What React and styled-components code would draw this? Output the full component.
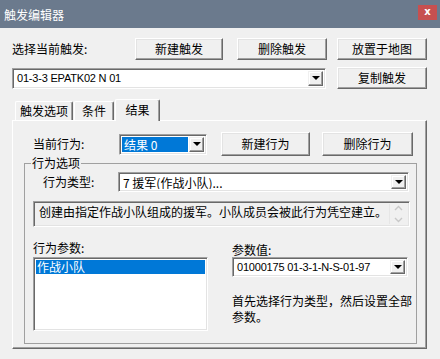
import React from "react";
import styled, { createGlobalStyle } from "styled-components";

const GlobalStyle = createGlobalStyle`
  html, body {
    margin: 0;
    padding: 0;
    background: #2f3443;
  }
  body {
    font-family: "Noto Sans CJK SC", "Liberation Sans", sans-serif;
    font-size: 12px;
    color: #000;
  }
`;

const Window = styled.div`
  width: 440px;
  height: 359px;
  background: #f0f0f0;
  display: flex;
  flex-direction: column;
  overflow: hidden;
`;

const TitleBar = styled.div`
  height: 28px;
  flex: none;
  box-sizing: border-box;
  background: #6b7a8d;
  display: flex;
  align-items: flex-start;
  justify-content: space-between;
  padding: 0 3px 0 4px;
`;

const Title = styled.span`
  color: #fff;
  font-size: 12px;
  line-height: 14px;
  margin-top: 8px;
`;

const CloseBtn = styled.div`
  width: 19px;
  height: 15px;
  margin-top: 5px;
  background: #c75050;
  color: #fff;
  font: bold 10px/14px "DejaVu Sans", sans-serif;
  text-align: center;
`;

const Body = styled.div`
  padding: 10px 0 0 12px;
  display: flex;
  flex-direction: column;
`;

const Row = styled.div`
  display: flex;
  align-items: center;
  margin-top: ${(p) => p.$mt || 0}px;
`;

const Label = styled.span`
  width: ${(p) => p.$w}px;
  flex: none;
  line-height: 14px;
  white-space: nowrap;
  margin-left: ${(p) => p.$ml || 0}px;
  margin-top: ${(p) => p.$mt || 0}px;
`;

const Button = styled.button`
  box-sizing: border-box;
  width: ${(p) => p.$w}px;
  height: ${(p) => p.$h || 22}px;
  margin-left: ${(p) => p.$ml || 0}px;
  flex: none;
  padding: 0;
  background: #f0f0f0;
  border: 1px solid;
  border-color: #fff #696969 #696969 #fff;
  box-shadow: inset -1px -1px 0 #a0a0a0, inset 1px 1px 0 #e3e3e3;
  font: 12px/14px "Noto Sans CJK SC", sans-serif;
  color: #000;
`;

const Sunken = styled.div`
  box-sizing: border-box;
  border: 1px solid;
  border-color: #a0a0a0 #fff #fff #a0a0a0;
  box-shadow: inset 1px 1px 0 #696969, inset -1px -1px 0 #e3e3e3;
`;

const Combo = styled(Sunken)`
  width: ${(p) => p.$w}px;
  height: ${(p) => p.$h || 21}px;
  margin-left: ${(p) => p.$ml || 0}px;
  flex: none;
  display: flex;
  align-items: stretch;
  background: #fff;
  padding: 2px;
`;

const ComboText = styled.div`
  flex: 1;
  display: flex;
  align-items: center;
  padding-left: 2px;
  margin-right: 1px;
  background: ${(p) => (p.$sel ? "#0078d7" : "transparent")};
  color: ${(p) => (p.$sel ? "#fff" : "#000")};
  font-family: ${(p) =>
    p.$latin ? '"Liberation Sans", sans-serif' : '"Noto Sans CJK SC", sans-serif'};
  font-size: ${(p) => (p.$latin ? 11 : 12)}px;
  letter-spacing: ${(p) => (p.$latin ? "-0.2px" : "0")};
  white-space: nowrap;
  overflow: hidden;
`;

const DropBtn = styled.div`
  width: 15px;
  flex: none;
  box-sizing: border-box;
  background: #f0f0f0;
  border: 1px solid;
  border-color: #f0f0f0 #696969 #696969 #f0f0f0;
  box-shadow: inset -1px -1px 0 #a0a0a0, inset 1px 1px 0 #fff;
  display: flex;
  align-items: center;
  justify-content: center;

  &::after {
    content: "";
    width: 0;
    height: 0;
    border-left: 4px solid transparent;
    border-right: 4px solid transparent;
    border-top: 4px solid #000;
  }
`;

const TabStrip = styled.div`
  display: flex;
  align-items: flex-end;
  height: 20px;
  margin-top: 11px;
  padding-left: 3px;
`;

const Tab = styled.div`
  box-sizing: border-box;
  position: relative;
  z-index: ${(p) => (p.$active ? 1 : 0)};
  width: ${(p) => p.$w}px;
  height: ${(p) => (p.$active ? 22 : 19)}px;
  margin-left: ${(p) => p.$ml || 0}px;
  margin-bottom: ${(p) => (p.$active ? -1 : 0)}px;
  background: #f0f0f0;
  border: 1px solid;
  border-bottom: none;
  border-color: #fff #696969 #696969 #fff;
  box-shadow: inset -1px 0 0 #a0a0a0;
  border-radius: 2px 2px 0 0;
  text-align: center;
  line-height: ${(p) => (p.$active ? 19 : 17)}px;
`;

const Panel = styled.div`
  box-sizing: border-box;
  width: 415px;
  height: 229px;
  border: 1px solid;
  border-color: #fff #696969 #696969 #fff;
  box-shadow: inset -1px -1px 0 #a0a0a0;
  padding: 11px 0 0 20px;
  display: flex;
  flex-direction: column;
`;

const Group = styled.fieldset`
  box-sizing: border-box;
  width: 393px;
  height: 188px;
  margin: 0 0 0 -9px;
  padding: 2px 0 0 8px;
  border: 1px solid #a0a0a0;
  display: flex;
  flex-direction: column;
`;

const Legend = styled.legend`
  padding: 0 1px;
  margin-left: -2px;
  line-height: 14px;
`;

const Desc = styled(Sunken)`
  width: 377px;
  height: 26px;
  margin-top: 9px;
  padding: 2px 2px 2px 5px;
  display: flex;
  background: #f0f0f0;
`;

const DescText = styled.div`
  flex: 1;
  line-height: 16px;
  white-space: nowrap;
  overflow: hidden;
`;

const ScrollBar = styled.div`
  width: 17px;
  flex: none;
  display: flex;
  flex-direction: column;
  justify-content: space-between;
  align-items: center;
  border-left: 1px solid #e6e6e6;
  padding: 1px 0;
`;

const Columns = styled.div`
  display: flex;
  margin-top: 14px;
`;

const Col = styled.div`
  width: ${(p) => p.$w}px;
  margin-left: ${(p) => p.$ml || 0}px;
  display: flex;
  flex-direction: column;
`;

const ListBox = styled(Sunken)`
  width: 175px;
  height: 74px;
  margin-top: 2px;
  padding: 2px;
  background: #fff;
`;

const ListItem = styled.div`
  height: 14px;
  line-height: 14px;
  padding-left: 1px;
  background: ${(p) => (p.$sel ? "#0078d7" : "transparent")};
  color: ${(p) => (p.$sel ? "#fff" : "#000")};
`;

const Note = styled.div`
  width: 184px;
  margin-top: 16px;
  line-height: 16px;
`;

const Chevron = ({ up }) => (
  <svg width="9" height="6" viewBox="0 0 9 6">
    <path
      d={up ? "M1 5 L4.5 1.5 L8 5" : "M1 1 L4.5 4.5 L8 1"}
      fill="none"
      stroke="#c8c8c8"
      strokeWidth="1.4"
    />
  </svg>
);

const App = () => (
  <>
    <GlobalStyle />
    <Window>
      <TitleBar>
        <Title>触发编辑器</Title>
        <CloseBtn>x</CloseBtn>
      </TitleBar>
      <Body>
        <Row>
          <Label $w={123}>选择当前触发:</Label>
          <Button $w={88}>新建触发</Button>
          <Button $w={90} $ml={14}>删除触发</Button>
          <Button $w={90} $ml={10}>放置于地图</Button>
        </Row>
        <Row $mt={7}>
          <Combo $w={314}>
            <ComboText $latin>01-3-3 EPATK02 N 01</ComboText>
            <DropBtn />
          </Combo>
          <Button $w={90} $ml={11}>复制触发</Button>
        </Row>
        <TabStrip>
          <Tab $w={58}>触发选项</Tab>
          <Tab $w={40} $ml={1}>条件</Tab>
          <Tab $w={45} $ml={1} $active>结果</Tab>
        </TabStrip>
        <Panel>
          <Row>
            <Label $w={86}>当前行为:</Label>
            <Combo $w={88}>
              <ComboText $sel>结果 0</ComboText>
              <DropBtn />
            </Combo>
            <Button $w={89} $h={24} $ml={14}>新建行为</Button>
            <Button $w={91} $h={24} $ml={12}>删除行为</Button>
          </Row>
          <Group>
            <Legend>行为选项</Legend>
            <Row>
              <Label $w={75} $ml={10}>行为类型:</Label>
              <Combo $w={291} $h={20}>
                <ComboText>7 援军(作战小队)...</ComboText>
                <DropBtn />
              </Combo>
            </Row>
            <Desc>
              <DescText>创建由指定作战小队组成的援军。小队成员会被此行为凭空建立。</DescText>
              <ScrollBar>
                <Chevron up />
                <Chevron />
              </ScrollBar>
            </Desc>
            <Columns>
              <Col $w={175}>
                <Label>行为参数:</Label>
                <ListBox>
                  <ListItem $sel>作战小队</ListItem>
                </ListBox>
              </Col>
              <Col $w={184} $ml={24}>
                <Label $mt={2}>参数值:</Label>
                <Combo $w={176} $h={20}>
                  <ComboText $latin>01000175 01-3-1-N-S-01-97</ComboText>
                  <DropBtn />
                </Combo>
                <Note>首先选择行为类型，然后设置全部参数。</Note>
              </Col>
            </Columns>
          </Group>
        </Panel>
      </Body>
    </Window>
  </>
);

export default App;
